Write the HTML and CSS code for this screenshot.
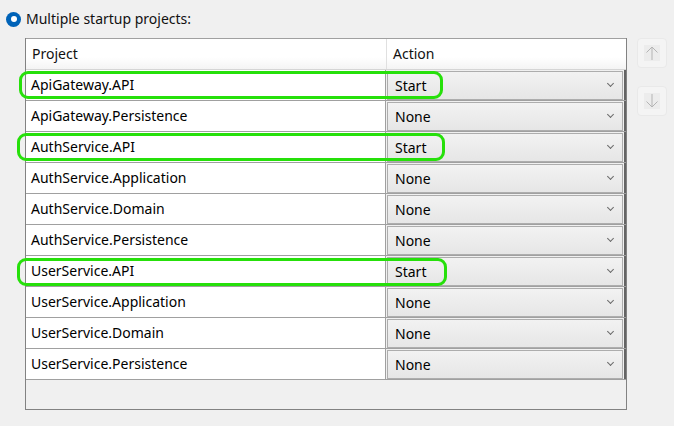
FILE: index.html
```html
<!DOCTYPE html>
<html>
<head>
<meta charset="utf-8">
<link rel="stylesheet" href="styles.css">
</head>
<body>
<div class="page">
  <div class="option">
    <span class="radio"><span class="dot"></span></span>
    <span class="label">Multiple startup projects:</span>
  </div>
  <div class="main">
    <div class="grid">
      <div class="head">
        <div class="hcell proj">Project</div>
        <div class="hcell act">Action</div>
      </div>
      <div class="row"><div class="cell proj">ApiGateway.API</div><div class="cell act"><div class="combo"><span>Start</span><span class="chev"></span></div></div></div>
      <div class="row"><div class="cell proj">ApiGateway.Persistence</div><div class="cell act"><div class="combo"><span>None</span><span class="chev"></span></div></div></div>
      <div class="row"><div class="cell proj">AuthService.API</div><div class="cell act"><div class="combo"><span>Start</span><span class="chev"></span></div></div></div>
      <div class="row"><div class="cell proj">AuthService.Application</div><div class="cell act"><div class="combo"><span>None</span><span class="chev"></span></div></div></div>
      <div class="row"><div class="cell proj">AuthService.Domain</div><div class="cell act"><div class="combo"><span>None</span><span class="chev"></span></div></div></div>
      <div class="row"><div class="cell proj">AuthService.Persistence</div><div class="cell act"><div class="combo"><span>None</span><span class="chev"></span></div></div></div>
      <div class="row"><div class="cell proj">UserService.API</div><div class="cell act"><div class="combo"><span>Start</span><span class="chev"></span></div></div></div>
      <div class="row"><div class="cell proj">UserService.Application</div><div class="cell act"><div class="combo"><span>None</span><span class="chev"></span></div></div></div>
      <div class="row"><div class="cell proj">UserService.Domain</div><div class="cell act"><div class="combo"><span>None</span><span class="chev"></span></div></div></div>
      <div class="row"><div class="cell proj">UserService.Persistence</div><div class="cell act"><div class="combo"><span>None</span><span class="chev"></span></div></div></div>
      <div class="filler"></div>
    </div>
    <div class="side">
      <div class="mbtn"><svg width="16" height="16" viewBox="0 0 16 16"><path d="M8 2v13M2.5 7.5L8 2l5.5 5.5" fill="none" stroke="#b4b4b4" stroke-width="1"/></svg></div>
      <div class="mbtn"><svg width="16" height="16" viewBox="0 0 16 16"><path d="M8 1v13M2.5 8.5L8 14l5.5-5.5" fill="none" stroke="#b4b4b4" stroke-width="1"/></svg></div>
    </div>
  </div>
  <div class="mark m1"></div>
  <div class="mark m2"></div>
  <div class="mark m3"></div>
</div>
</body>
</html>
```
FILE: styles.css
```css
html, body {
  margin: 0;
  padding: 0;
  background: #f0f0f0;
}
body {
  font-family: "Noto Sans", "Open Sans", sans-serif;
  font-size: 14px;
  color: #000;
}
.page {
  position: relative;
  width: 674px;
  height: 426px;
}
.option {
  display: flex;
  align-items: center;
  height: 20px;
  padding: 9px 0 0 6px;
}
.radio {
  width: 15px;
  height: 15px;
  border-radius: 50%;
  background: #0063b8;
  display: flex;
  align-items: center;
  justify-content: center;
}
.dot {
  width: 6px;
  height: 6px;
  border-radius: 50%;
  background: #fff;
}
.label {
  margin-left: 5px;
  line-height: 20px;
  color: #111;
}
.main {
  display: flex;
  margin: 9px 0 0 25px;
  gap: 10px;
}
.grid {
  width: 600px;
  height: 371px;
  border: 1px solid #828282;
  border-top: none;
  display: flex;
  flex-direction: column;
  background: #f0f0f0;
}
.head {
  display: flex;
  height: 30px;
  border-top: 1px solid #a0a0a0;
  border-bottom: 1px solid #d5d5d5;
  background: linear-gradient(#ffffff 0%, #ffffff 60%, #f4f4f4 100%);
}
.hcell {
  line-height: 30px;
  padding-left: 6px;
  color: #111;
}
.hcell.proj {
  width: 354px;
  border-right: 1px solid #e0e0e0;
}
.hcell.act {
  flex: 1;
}
.row {
  display: flex;
  height: 30px;
  border-bottom: 1px solid #a0a0a0;
}
.cell.proj {
  width: 354px;
  padding-left: 5px;
  background: #fff;
  line-height: 29px;
  border-right: 1px solid #a0a0a0;
}
.cell.act {
  flex: 1;
  display: flex;
  padding: 1px 1px 0 1px;
  border-right: 2px solid #646464;
}
.combo {
  flex: 1;
  display: flex;
  align-items: center;
  justify-content: space-between;
  border: 1px solid #adadad;
  background: linear-gradient(#f2f2f2, #e6e6e6);
  padding: 0 0 0 7px;
  height: 27px;
}
.chev {
  width: 4px;
  height: 4px;
  border-right: 1.5px solid #6a6a6a;
  border-bottom: 1.5px solid #6a6a6a;
  transform: rotate(45deg);
  margin: -4px 9px 0 0;
}
.filler {
  flex: 1;
  background: #f0f0f0;
}
.side {
  display: flex;
  flex-direction: column;
  gap: 18px;
}
.mbtn {
  width: 30px;
  height: 30px;
  box-sizing: border-box;
  border: 1px solid #e9e9e9;
  border-radius: 4px;
  background: #f4f4f4;
  display: flex;
  align-items: center;
  justify-content: center;
}
.mbtn svg {
  background: #ececec;
}
.mark {
  position: absolute;
  border: 3px solid #26e00a;
  border-radius: 9px;
}
.m1 { left: 19px; top: 71px; width: 418px; height: 22px; }
.m2 { left: 17px; top: 133px; width: 422px; height: 22px; }
.m3 { left: 17px; top: 258px; width: 424px; height: 22px; }
```
